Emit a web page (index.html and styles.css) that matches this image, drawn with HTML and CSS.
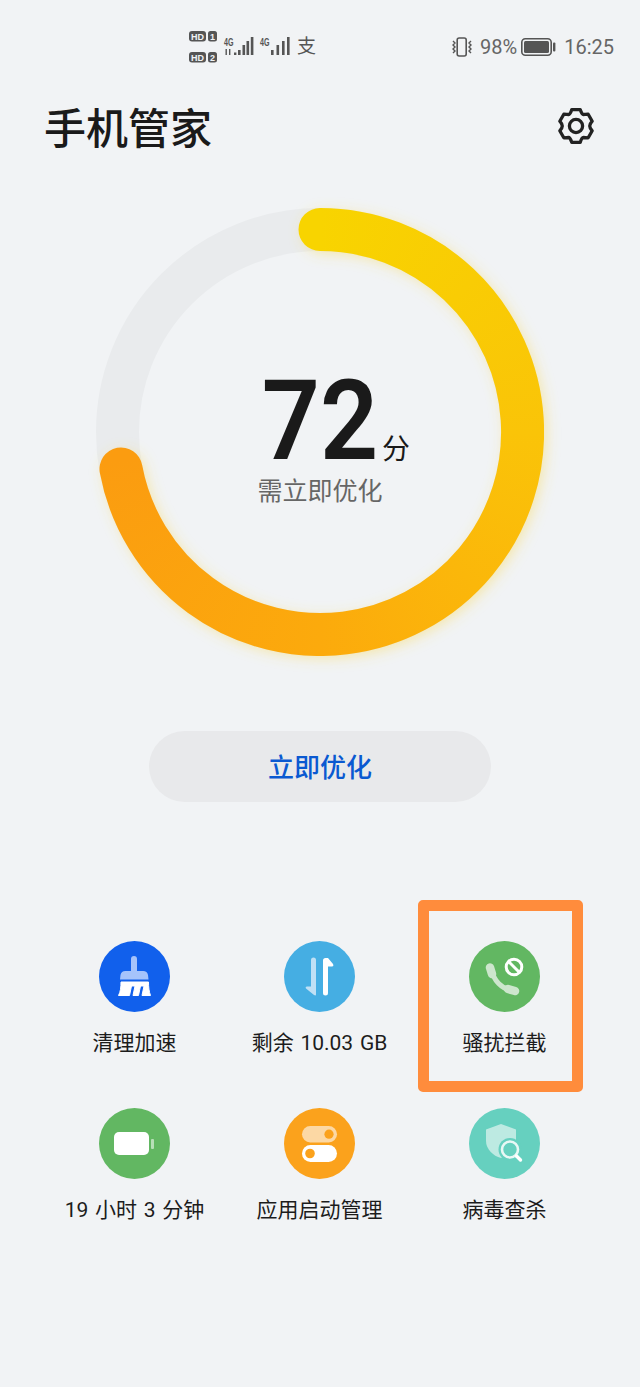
FILE: index.html
```html
<!DOCTYPE html>
<html lang="zh-CN">
<head>
<meta charset="utf-8">
<title>手机管家</title>
<link rel="stylesheet" href="styles.css">
</head>
<body>
<div class="page">
  <header class="status">
    <svg class="sim" width="130" height="38" viewBox="0 0 130 38">
      <g class="ico-fill">
        <rect x="1" y="3" width="17" height="10.5" rx="3"/><rect x="20" y="3" width="9" height="10.5" rx="2.5"/>
        <rect x="1" y="24" width="17" height="10.5" rx="3"/><rect x="20" y="24" width="9" height="10.5" rx="2.5"/>
        <rect x="46" y="24.5" width="2.4" height="2.5"/>
        <rect x="50" y="22" width="2.6" height="5"/><rect x="54.5" y="17" width="2.6" height="10"/><rect x="58.5" y="13" width="2.6" height="14"/><rect x="62.8" y="9" width="2.6" height="18"/>
        <rect x="83" y="22" width="2.6" height="5"/><rect x="88.5" y="17" width="2.6" height="10"/><rect x="94" y="13" width="2.6" height="14"/><rect x="99" y="9" width="2.6" height="18"/>
        <rect x="37.5" y="21" width="1.4" height="6"/><rect x="41" y="21" width="1.4" height="6"/>
      </g>
      <text class="hd" x="9.5" y="11.8" text-anchor="middle" textLength="13" lengthAdjust="spacingAndGlyphs">HD</text>
      <text class="hd" x="24.5" y="11.8" text-anchor="middle">1</text>
      <text class="hd" x="9.5" y="32.8" text-anchor="middle" textLength="13" lengthAdjust="spacingAndGlyphs">HD</text>
      <text class="hd" x="24.5" y="32.8" text-anchor="middle">2</text>
      <text class="net" x="36" y="17.500" textLength="9.5" lengthAdjust="spacingAndGlyphs">4G</text>
      <text class="net" x="72" y="17.500" textLength="9.5" lengthAdjust="spacingAndGlyphs">4G</text>
      <text class="zhi" x="109" y="25">支</text>
    </svg>
    <div class="status-right">
      <svg class="vibrate" width="22" height="20" viewBox="0 0 22 20">
        <rect x="6.2" y="1" width="9" height="18" rx="2" fill="none" stroke="#555" stroke-width="1.6"/>
        <path d="M2 4l2 2-2 2 2 2-2 2 2 2-2 2M20 4l-2 2 2 2-2 2 2 2-2 2 2 2" fill="none" stroke="#555" stroke-width="1.4"/>
      </svg>
      <span class="pct">98%</span>
      <svg class="battery" width="35" height="18" viewBox="0 0 35 18">
        <rect x="0.8" y="0.8" width="29.4" height="16.4" rx="3.5" fill="none" stroke="#555" stroke-width="1.6"/>
        <rect x="3" y="3" width="25" height="12" rx="1.5" fill="#555"/>
        <rect x="32" y="4.5" width="2.4" height="9" rx="1" fill="#555"/>
      </svg>
      <span class="clock">16:25</span>
    </div>
  </header>

  <div class="titlebar">
    <h1 class="title">手机管家</h1>
    <svg class="gear" width="38" height="38" viewBox="0 0 38 38">
      <path d="M14.8 2.6H23.200Q25 7.500 26.250 7.500T31.200 7.200L35.200 14.200Q32.700 17 32.700 19T35.200 23.800L31.200 30.800Q27.700 30.500 26.250 30.500T23.200 35.400H14.800Q13 30.500 11.750 30.500T6.800 30.800L2.800 23.800Q5.300 21 5.300 19T2.800 14.200L6.800 7.200Q10.300 7.500 11.750 7.500T14.800 2.600Z" fill="none" stroke="#222" stroke-width="3.300" stroke-linejoin="round"/>
      <circle cx="19" cy="19" r="6.600" fill="none" stroke="#222" stroke-width="3.300"/>
    </svg>
  </div>

  <section class="gauge">
    <svg class="ring" width="448" height="448" viewBox="0 0 448 448">
      <defs>
        <filter id="glow" x="-10%" y="-10%" width="120%" height="120%"><feGaussianBlur stdDeviation="7"/></filter>
        <mask id="arc-mask" maskUnits="userSpaceOnUse" x="0" y="0" width="448" height="448">
          <path d="M224 21.500A202.500 202.500 0 1 1 25 261" fill="none" stroke="#fff" stroke-width="43" stroke-linecap="round"/>
        </mask>
      </defs>
      <circle cx="224" cy="224" r="202.500" fill="none" stroke="#e9ebed" stroke-width="43"/>
      <path d="M224 21.500A202.500 202.500 0 1 1 25 261" fill="none" stroke="#f9d84a" stroke-opacity="0.45" stroke-width="41" stroke-linecap="round" filter="url(#glow)" transform="translate(3 3)"/>
      <g mask="url(#arc-mask)">
        <foreignObject x="0" y="0" width="448" height="448"><div class="sweep"></div></foreignObject>
      </g>
    </svg>
    <div class="readout">
      <div class="score"><span class="digits">72</span><span class="unit">分</span></div>
      <div class="verdict">需立即优化</div>
    </div>
  </section>

  <button class="cta" type="button">立即优化</button>

  <section class="tools">
    <div class="tool">
      <svg class="disc" viewBox="0 0 71 71"><circle cx="35.500" cy="35.500" r="35.500" fill="#1160ec"/>
        <path d="M32 18a3 3 0 0 1 6 0V30h6a5 5 0 0 1 5 4l0.500 4.500H21l0.500-4.500a5 5 0 0 1 5-4h5.500z" fill="#a5c3fb"/>
        <path d="M22 41H49.500C49.500 46 50 50.500 51.500 54.500H43L45 45H41.500L39.500 54.500H34L36 45H32.500L30.500 54.500H19.500C21.500 51 22 46 22 41Z" fill="#fff" stroke="#fff" stroke-width="1" stroke-linejoin="round"/>
      </svg>
      <span class="label">清理加速</span>
    </div>
    <div class="tool">
      <svg class="disc" viewBox="0 0 71 71"><circle cx="35.500" cy="35.500" r="35.500" fill="#45aee3"/>
        <path d="M27 19a2.500 2.500 0 0 1 5 0V53.500Q32 55 30 54L22 47.500Q21 45.500 23 45.500H27Z" fill="#bfe0f5"/>
        <path d="M39 19.500Q39 17 41.500 17H44L49 23Q50 25.500 48 25.500H44V52a2.500 2.500 0 0 1-5 0Z" fill="#fff"/>
      </svg>
      <span class="label">剩余 10.03 GB</span>
    </div>
    <div class="tool tool-marked">
      <svg class="disc" viewBox="0 0 71 71"><circle cx="35.500" cy="35.500" r="35.500" fill="#62b762"/>
        <path d="M23 29C24 39 33 48 43 49.500" fill="none" stroke="#cde6cd" stroke-width="5"/>
        <path d="M21 26.500L23 33M39 48L46 50" fill="none" stroke="#cde6cd" stroke-width="8.500" stroke-linecap="round"/>
        <circle cx="45" cy="26" r="7.800" fill="none" stroke="#fff" stroke-width="3"/>
        <path d="M40 21L50 31" stroke="#fff" stroke-width="3"/>
      </svg>
      <span class="label">骚扰拦截</span>
      <div class="marker"></div>
    </div>
    <div class="tool">
      <svg class="disc" viewBox="0 0 71 71"><circle cx="35.500" cy="35.500" r="35.500" fill="#62b762"/>
        <rect x="15" y="24" width="35" height="23" rx="5" fill="#fff"/>
        <rect x="52" y="31" width="3" height="10" rx="1" fill="#b7dfb7"/>
      </svg>
      <span class="label">19 小时 3 分钟</span>
    </div>
    <div class="tool">
      <svg class="disc" viewBox="0 0 71 71"><circle cx="35.500" cy="35.500" r="35.500" fill="#fba21c"/>
        <rect x="18" y="18" width="35" height="16.500" rx="8.250" fill="#fcd8a4"/>
        <circle cx="45" cy="26.200" r="4.600" fill="#fba21c"/>
        <rect x="18" y="37" width="35" height="17" rx="8.500" fill="#fff"/>
        <circle cx="26" cy="45.500" r="4.800" fill="#fba21c"/>
      </svg>
      <span class="label">应用启动管理</span>
    </div>
    <div class="tool">
      <svg class="disc" viewBox="0 0 71 71"><circle cx="35.500" cy="35.500" r="35.500" fill="#66d0bf"/>
        <path d="M32 16L17 21.500V33C17 41 24 48 32 50C40 48 47 41 47 33V21.500Z" fill="#bdeae2"/>
        <circle cx="41" cy="41.500" r="11.500" fill="#66d0bf"/>
        <circle cx="41" cy="41.500" r="8" fill="none" stroke="#e9f8f5" stroke-width="2.600"/>
        <path d="M47.500 48L51.500 52" stroke="#fff" stroke-width="3.400" stroke-linecap="round"/>
      </svg>
      <span class="label">病毒查杀</span>
    </div>
  </section>
</div>
</body>
</html>
```

FILE: styles.css
```css
* { box-sizing: border-box; }
html, body { margin: 0; padding: 0; }
body {
  background: #f1f3f5;
  font-family: Roboto, "Noto Sans CJK SC", sans-serif;
  color: #1c1c1c;
}
.page { width: 640px; height: 1387px; overflow: hidden; display: flex; flex-direction: column; align-items: center; }

.status { width: 100%; height: 94px; padding: 0 26px 0 188px; display: flex; align-items: center; justify-content: space-between; color: #666; }
.status svg { display: block; }
.ico-fill { fill: #555; }
.hd { font: 700 9px "Liberation Sans", sans-serif; fill: #f1f3f5; }
.net { font: 700 11px "Liberation Sans", sans-serif; fill: #555; }
.zhi { font: 400 19px "Noto Sans CJK SC", sans-serif; fill: #555; }
.status-right { display: flex; align-items: center; font-size: 20px; line-height: 24px; }
.pct { margin-left: 7px; }
.battery { margin-left: 4px; }
.clock { margin-left: 8px; }

.titlebar { width: 100%; height: 66px; padding: 0 45px 0 44px; display: flex; align-items: center; justify-content: space-between; }
.title { margin: 0 0 3px; font-size: 42px; line-height: 56px; font-weight: 500; font-family: "Noto Sans CJK SC", sans-serif; color: #1a1a1a; }
.gear { margin-top: -2px; }

.gauge { position: relative; width: 448px; height: 448px; margin-top: 48px; }
.ring { display: block; overflow: visible; }
.sweep { width: 448px; height: 448px; background: conic-gradient(#f8d400 0deg, #fac408 90deg, #fcaa0c 180deg, #fb9c10 262deg, #fb9c10 300deg, #f8d400 300deg); }
.readout { position: absolute; inset: 0; display: flex; flex-direction: column; align-items: center; }
.score { position: relative; margin-top: 171px; font-size: 112px; line-height: 84px; font-weight: 600; color: #1a1a1a; }
.digits { display: inline-block; transform: scaleX(0.91); }
.unit { position: absolute; left: 100%; bottom: -1px; margin-left: -2px; font: 400 28px/34px "Noto Sans CJK SC", sans-serif; }
.verdict { margin-top: 8px; font: 400 25px/36px "Noto Sans CJK SC", sans-serif; color: #666; }

.cta { width: 342px; height: 71px; margin-top: 75px; border: 0; border-radius: 36px; background: #e8e9eb; color: #0a59d1; font: 500 26px/36px "Noto Sans CJK SC", sans-serif; padding: 0 0 2px; }

.tools { width: 555px; margin-top: 139px; margin-left: -1px; display: grid; grid-template-columns: repeat(3, 185px); grid-auto-rows: 167px; }
.tool { position: relative; display: flex; flex-direction: column; align-items: center; }
.disc { display: block; width: 71px; height: 71px; }
.label { margin-top: 16px; font-size: 21px; line-height: 30px; white-space: nowrap; word-spacing: 1.5px; color: #1c1c1c; }
.marker { position: absolute; left: 5.500px; top: -41px; width: 165px; height: 192px; border: 11px solid #ff8c3c; border-radius: 5px; }
```
